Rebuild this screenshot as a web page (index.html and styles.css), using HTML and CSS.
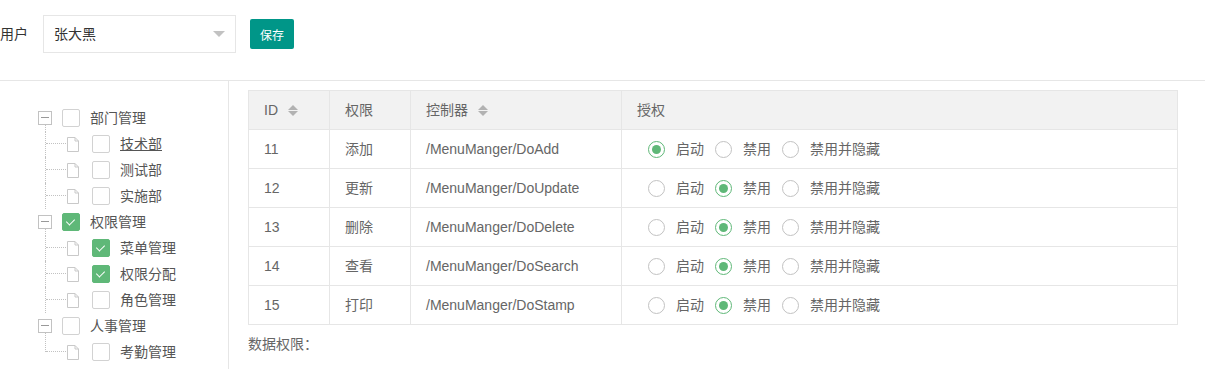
FILE: index.html
```html
<!doctype html>
<html lang="zh-CN">
  <head>
    <meta charset="UTF-8" />
    <title>权限分配</title>
    <link rel="stylesheet" href="styles.css">
  </head>
  <body>
    <div class="toolbar">
      <label class="field-label">用户</label>
      <div class="select">
        <span>张大黑</span>
        <i class="select-arrow"></i>
      </div>
      <button class="btn">保存</button>
    </div>

    <div class="main">
      <div class="tree-pane">
        <div class="tree">
          <div class="node">
            <span class="toggle"></span><span class="check"></span><span class="label">部门管理</span>
          </div>
          <div class="node child">
            <span class="line"></span><svg class="file" viewBox="0 0 14 17"><path d="M1.5 1.5H9L12.5 5V15.5H1.5Z M9 1.5V5H12.5" /></svg><span class="check"></span><span class="label hover">技术部</span>
          </div>
          <div class="node child">
            <span class="line"></span><svg class="file" viewBox="0 0 14 17"><path d="M1.5 1.5H9L12.5 5V15.5H1.5Z M9 1.5V5H12.5" /></svg><span class="check"></span><span class="label">测试部</span>
          </div>
          <div class="node child">
            <span class="line"></span><svg class="file" viewBox="0 0 14 17"><path d="M1.5 1.5H9L12.5 5V15.5H1.5Z M9 1.5V5H12.5" /></svg><span class="check"></span><span class="label">实施部</span>
          </div>

          <div class="node">
            <span class="toggle"></span><span class="check on"></span><span class="label">权限管理</span>
          </div>
          <div class="node child">
            <span class="line"></span><svg class="file" viewBox="0 0 14 17"><path d="M1.5 1.5H9L12.5 5V15.5H1.5Z M9 1.5V5H12.5" /></svg><span class="check on"></span><span class="label">菜单管理</span>
          </div>
          <div class="node child">
            <span class="line"></span><svg class="file" viewBox="0 0 14 17"><path d="M1.5 1.5H9L12.5 5V15.5H1.5Z M9 1.5V5H12.5" /></svg><span class="check on"></span><span class="label">权限分配</span>
          </div>
          <div class="node child">
            <span class="line"></span><svg class="file" viewBox="0 0 14 17"><path d="M1.5 1.5H9L12.5 5V15.5H1.5Z M9 1.5V5H12.5" /></svg><span class="check"></span><span class="label">角色管理</span>
          </div>

          <div class="node">
            <span class="toggle"></span><span class="check"></span><span class="label">人事管理</span>
          </div>
          <div class="node child">
            <span class="line end"></span><svg class="file" viewBox="0 0 14 17"><path d="M1.5 1.5H9L12.5 5V15.5H1.5Z M9 1.5V5H12.5" /></svg><span class="check"></span><span class="label">考勤管理</span>
          </div>
        </div>
      </div>

      <div class="content">
        <table class="grid">
          <thead>
            <tr>
              <th class="col-id">ID <i class="sort"></i></th>
              <th class="col-name">权限</th>
              <th class="col-ctrl">控制器 <i class="sort"></i></th>
              <th>授权</th>
            </tr>
          </thead>
          <tbody id="rows"></tbody>
        </table>
        <p class="data-title">数据权限：</p>
      </div>
    </div>

    <script>
      const rows = [
        { id: 11, name: "添加", ctrl: "/MenuManger/DoAdd", state: 0 },
        { id: 12, name: "更新", ctrl: "/MenuManger/DoUpdate", state: 1 },
        { id: 13, name: "删除", ctrl: "/MenuManger/DoDelete", state: 1 },
        { id: 14, name: "查看", ctrl: "/MenuManger/DoSearch", state: 1 },
        { id: 15, name: "打印", ctrl: "/MenuManger/DoStamp", state: 1 },
      ];
      const options = ["启动", "禁用", "禁用并隐藏"];

      const tbody = document.getElementById("rows");
      tbody.innerHTML = rows
        .map((r) => {
          const radios = options
            .map(
              (o, i) =>
                `<span class="radio${i === r.state ? " on" : ""}"><i></i>${o}</span>`
            )
            .join("");
          return `<tr><td>${r.id}</td><td>${r.name}</td><td>${r.ctrl}</td><td><div class="radios">${radios}</div></td></tr>`;
        })
        .join("");
    </script>
  </body>
</html>
```

FILE: styles.css
```css
body {
  margin: 0;
  font-family: "Liberation Sans", "Noto Sans CJK SC", sans-serif;
  font-size: 14px;
  color: #666;
  background-color: #fff;
  overflow: hidden;
}

.toolbar {
  display: flex;
  align-items: flex-start;
  height: 81px;
  border-bottom: 1px solid #e6e6e6;
  box-sizing: border-box;
}

.field-label {
  margin-top: 24px;
  line-height: 20px;
  color: #333;
}

.select {
  position: relative;
  width: 193px;
  height: 38px;
  margin: 15px 0 0 15px;
  border: 1px solid #e6e6e6;
  box-sizing: border-box;
  padding-left: 10px;
  line-height: 36px;
  color: #333;
}

.select-arrow {
  position: absolute;
  right: 10px;
  top: 15px;
  width: 0;
  height: 0;
  border-width: 6px;
  border-style: solid;
  border-color: #c2c2c2 transparent transparent transparent;
}

.btn {
  margin: 19px 0 0 14px;
  height: 30px;
  padding: 0 10px;
  border: none;
  border-radius: 2px;
  background-color: #009688;
  color: #fff;
  font-family: inherit;
  font-size: 12px;
}

.main {
  display: flex;
}

.tree-pane {
  width: 228px;
  height: 264px;
  border-right: 1px solid #e6e6e6;
  padding-top: 24px;
}

.node {
  display: flex;
  align-items: center;
  height: 26px;
  padding-left: 38px;
}

.node.child {
  padding-left: 45px;
}

.toggle {
  position: relative;
  width: 12px;
  height: 12px;
  border: 1px solid #c2c2c2;
  margin-right: 10px;
}

.toggle::before {
  content: "";
  position: absolute;
  left: 2px;
  right: 2px;
  top: 5px;
  border-top: 1px solid #999;
}

.toggle::after {
  content: "";
  position: absolute;
  left: 6px;
  top: 13px;
  height: 7px;
  border-left: 1px dotted #c2c2c2;
}

.line {
  position: relative;
  align-self: stretch;
  width: 21px;
  border-left: 1px dotted #c2c2c2;
  box-sizing: border-box;
}

.line.end {
  align-self: flex-start;
  height: 13px;
}

.line::after {
  content: "";
  position: absolute;
  left: 0;
  top: 12px;
  width: 20px;
  border-top: 1px dotted #c2c2c2;
}

.file {
  width: 14px;
  height: 17px;
  margin-right: 12px;
  fill: none;
  stroke: #c9c9c9;
  stroke-width: 1;
}

.check {
  position: relative;
  width: 18px;
  height: 18px;
  border: 1px solid #d2d2d2;
  border-radius: 2px;
  box-sizing: border-box;
  margin-right: 10px;
}

.check.on {
  background-color: #5fb878;
  border-color: #5fb878;
}

.check.on::after {
  content: "";
  position: absolute;
  left: 5px;
  top: 3px;
  width: 4px;
  height: 7px;
  border-right: 1px solid #fff;
  border-bottom: 1px solid #fff;
  transform: rotate(45deg);
}

.label {
  line-height: 20px;
  color: #555;
}

.label.hover {
  text-decoration: underline;
}

.content {
  flex: 1;
  padding: 9px 27px 0 19px;
}

.grid {
  width: 930px;
  border-collapse: collapse;
  table-layout: fixed;
}

.grid th,
.grid td {
  border: 1px solid #e6e6e6;
  height: 39px;
  padding: 0 15px;
  line-height: 20px;
  text-align: left;
  font-weight: normal;
  box-sizing: border-box;
  white-space: nowrap;
}

.grid th {
  background-color: #f2f2f2;
}

.col-id,
.col-name {
  width: 81px;
}

.col-ctrl {
  width: 211px;
}

.sort {
  display: inline-block;
  position: relative;
  width: 10px;
  height: 11px;
  margin-left: 6px;
  vertical-align: -1px;
}

.sort::before,
.sort::after {
  content: "";
  position: absolute;
  left: 0;
  border-left: 5px solid transparent;
  border-right: 5px solid transparent;
}

.sort::before {
  top: 0;
  border-bottom: 5px solid #b2b2b2;
}

.sort::after {
  bottom: 0;
  border-top: 5px solid #b2b2b2;
}

.radios {
  display: flex;
  align-items: center;
  padding-left: 11px;
}

.radio {
  display: flex;
  align-items: center;
  margin-right: 11px;
  line-height: 20px;
}

.radio i {
  position: relative;
  width: 17px;
  height: 17px;
  border: 1px solid #c2c2c2;
  border-radius: 50%;
  box-sizing: border-box;
  margin-right: 11px;
}

.radio.on i {
  border-color: #5fb878;
}

.radio.on i::after {
  content: "";
  position: absolute;
  left: 3px;
  top: 3px;
  width: 9px;
  height: 9px;
  border-radius: 50%;
  background-color: #5fb878;
}

.data-title {
  margin: 9px 0 0;
  line-height: 20px;
}
```
